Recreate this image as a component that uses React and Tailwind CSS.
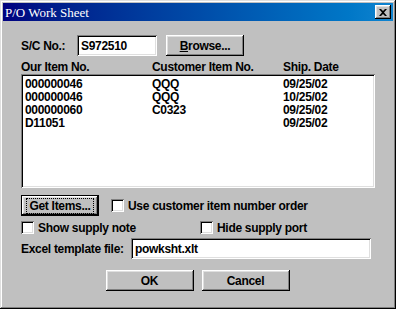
import React from 'react';

const font = { fontFamily: '"Liberation Sans", Arial, sans-serif' };

const raised = 'shadow-[inset_-1px_-1px_#000,inset_1px_1px_#fff,inset_-2px_-2px_#808080,inset_2px_2px_#dfdfdf]';
const sunken = 'shadow-[inset_1px_1px_#808080,inset_-1px_-1px_#fff,inset_2px_2px_#000,inset_-2px_-2px_#dfdfdf]';

const rows = [
    ['000000046', 'QQQ', '09/25/02'],
    ['000000046', 'QQQ', '10/25/02'],
    ['000000060', 'C0323', '09/25/02'],
    ['D11051', '', '09/25/02'],
];

function Check({ label, className = '' }) {
    return (
        <div className={`flex items-center ${className}`}>
            <div className={`w-[13px] h-[13px] bg-white ${sunken}`} />
            <span className="ml-[4px]">{label}</span>
        </div>
    );
}

function Button({ children, className = '' }) {
    return (
        <div className={`h-[21px] bg-[#c0c0c0] flex items-center justify-center ${raised} ${className}`}>
            {children}
        </div>
    );
}

export default function App() {
    return (
        <div
            className="w-[396px] h-[309px] bg-[#c0c0c0] p-[3px] text-[12px] font-bold text-black leading-none tracking-[-0.3px] shadow-[inset_-1px_-1px_#000,inset_1px_1px_#dfdfdf,inset_-2px_-2px_#808080,inset_2px_2px_#fff]"
            style={font}
        >
            {/* title bar */}
            <div className="h-[18px] flex items-center justify-between bg-linear-to-r from-[#000080] to-[#1084d0] pl-[2px] pr-[2px]">
                <span className="text-white font-normal text-[13px] tracking-normal" style={{ fontFamily: '"Liberation Serif", "Times New Roman", serif' }}>
                    P/O Work Sheet
                </span>
                <div className={`w-[16px] h-[14px] bg-[#c0c0c0] flex items-center justify-center ${raised}`}>
                    <svg width="8" height="7" viewBox="0 0 8 7">
                        <path d="M0 0h2l2 2 2-2h2L5 3.5 8 7H6L4 5 2 7H0l3-3.5z" fill="#000" />
                    </svg>
                </div>
            </div>

            <div className="pl-[18px] pr-[19px]">
                {/* S/C No row */}
                <div className="flex items-center mt-[14px] h-[21px]">
                    <span className="w-[56px]">S/C No.:</span>
                    <div className={`w-[80px] h-[21px] bg-white flex items-center pl-[4px] ${sunken}`}>S972510</div>
                    <Button className="w-[78px] ml-[9px]">
                        <span><span className="underline">B</span>rowse...</span>
                    </Button>
                </div>

                {/* headers */}
                <div className="flex mt-[4px] h-[14px] items-center">
                    <span className="w-[131px]">Our Item No.</span>
                    <span className="w-[131px]">Customer Item No.</span>
                    <span>Ship. Date</span>
                </div>

                {/* list */}
                <div className={`w-[354px] h-[114px] bg-white pt-[3px] pl-[4px] ${sunken}`}>
                    {rows.map((r, i) => (
                        <div key={i} className="flex h-[13px] items-center">
                            <span className="w-[127px]">{r[0]}</span>
                            <span className="w-[131px]">{r[1]}</span>
                            <span>{r[2]}</span>
                        </div>
                    ))}
                </div>

                {/* get items row */}
                <div className="flex items-center mt-[7px]">
                    <div className="w-[78px] h-[21px] border border-black">
                        <div className={`h-full flex items-center justify-center ${raised}`}>
                            <span className="outline-1 outline-dotted outline-black px-[2px] py-[1px]">Get Items...</span>
                        </div>
                    </div>
                    <Check label="Use customer item number order" className="ml-[12px]" />
                </div>

                {/* checkboxes */}
                <div className="flex items-center mt-[5px]">
                    <Check label="Show supply note" className="w-[179px]" />
                    <Check label="Hide supply port" />
                </div>

                {/* template */}
                <div className="flex items-center mt-[4px]">
                    <span className="w-[110px]">Excel template file:</span>
                    <div className={`w-[240px] h-[21px] bg-white flex items-center pl-[4px] ${sunken}`}>powksht.xlt</div>
                </div>

                {/* buttons */}
                <div className="flex justify-center mt-[11px] gap-[8px]">
                    <Button className="w-[88px]">OK</Button>
                    <Button className="w-[88px]">Cancel</Button>
                </div>
            </div>
        </div>
    );
}
